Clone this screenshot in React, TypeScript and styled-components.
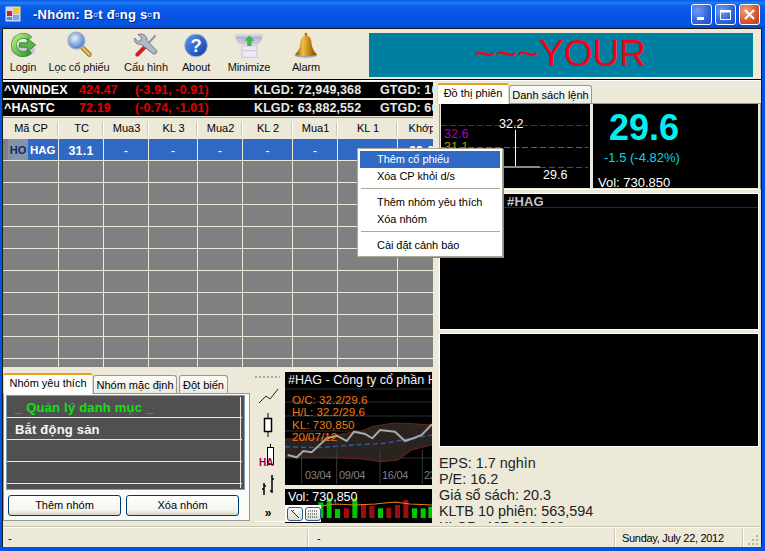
import React from "react";
import styled, { createGlobalStyle, css } from "styled-components";

const Global = createGlobalStyle`
  html, body { margin: 0; padding: 0; background: #0a50dc; }
  * { box-sizing: border-box; }
  body { font-family: "Liberation Sans", Arial, sans-serif; }
`;

const Window = styled.div`
  width: 765px; height: 551px; overflow: hidden; position: relative;
  display: flex; flex-direction: column;
  background: #0553e3; color: #000;
  font: 11px "Liberation Sans", Arial, sans-serif;
`;
const TitleBar = styled.div`
  height: 28px; flex: none; display: flex; align-items: center; padding: 0 5px 0 5px;
  background: linear-gradient(180deg, #0a5ae6 0%, #1f7cf5 10%, #0a5fe8 22%, #0553e3 60%, #0554e4 88%, #0345c8 100%);
`;
const TitleText = styled.div`
  margin-left: 12px; color: #fff; font: bold 13px "Liberation Sans", Arial, sans-serif;
  letter-spacing: 0.25px; text-shadow: 1px 1px 0 #0a2a90;
`;
const TitleButtons = styled.div`margin-left: auto; display: flex; gap: 3px; margin-right: 0; padding-top: 1px;`;
const CaptionButton = styled.div<{ $close?: boolean }>`
  width: 21px; height: 21px; border-radius: 3px; border: 1px solid #fff;
  display: flex; align-items: center; justify-content: center;
  background: ${(p) => p.$close
    ? "radial-gradient(circle at 30% 30%, #f0a080, #d8542c 60%, #b83a14)"
    : "radial-gradient(circle at 30% 30%, #6f9cf2, #2f62dc 60%, #1f4cc4)"};
`;
const Client = styled.div`
  flex: 1; min-height: 0; margin: 0 3px 4px 2px; background: #ece9d8;
  border: 1px solid #1a1a1a; border-bottom: 0; border-top-width: 1px;
  display: flex; flex-direction: column; position: relative;
`;
const Toolbar = styled.div`
  height: 51px; flex: none; display: flex; padding-left: 1px; border-bottom: 1px solid #000;
`;
const ToolItem = styled.div<{ $w: number }>`
  width: ${(p) => p.$w}px; display: flex; flex-direction: column; align-items: center;
  padding-top: 2px; font-size: 11px; white-space: nowrap;
`;
const ToolIcon = styled.svg`width: 28px; height: 28px; flex: none; display: block;`;
const ToolLabel = styled.span`margin-top: 1px; line-height: 14px; color: #111; letter-spacing: -0.1px;`;
const Banner = styled.div`
  margin: 4px 8px 2px auto; width: 384px; background: #0080a0; color: #f50018;
  display: flex; align-items: center; justify-content: center;
  font-size: 37px; line-height: 42px; padding: 0 2px 3px 0;
`;
const Main = styled.div`flex: 1; min-height: 0; display: flex; border-top: 1px solid #fff;`;
const LeftCol = styled.div`width: 430px; flex: none; display: flex; flex-direction: column; padding-top: 1px;`;
const Ticker = styled.div`
  height: 16px; margin-bottom: 2px; background: #000; display: grid; overflow: hidden;
  grid-template-columns: 75px 56px 119px 126px 60px; padding-left: 1px;
  font: bold 12.5px/16px "Liberation Sans", Arial, sans-serif; white-space: nowrap; letter-spacing: 0.1px;
`;
const TickName = styled.span`color: #fff; font-size: 12.5px;`;
const TickVal = styled.span`color: #e00000;`;
const TickVol = styled.span`color: #e8e8e8;`;
const Grid = styled.div`
  height: 250px; margin-top: -1px; overflow: hidden; background: #808080; border-top: 1px solid #8aa0b8; flex: none;
`;
const COLS = "56px 45px 45px 49px 45px 50px 45px 60px 48px";
const HeaderRow = styled.div`
  display: grid; grid-template-columns: ${COLS}; height: 21px; background: #ece9d8; border-bottom: 1px solid #ece9d8;
`;
const HeadCell = styled.div`
  display: flex; align-items: center; justify-content: center; font-size: 11px; white-space: nowrap; overflow: hidden;
  position: relative;
  &:not(:last-child)::after { content: ""; position: absolute; right: 0; top: 4px; bottom: 3px; width: 2px; background: linear-gradient(90deg, #c8c5b2 50%, #fff 50%); }
`;
const Row = styled.div<{ $sel?: boolean }>`
  display: grid; grid-template-columns: ${COLS}; height: 22px; border-bottom: 1px solid #ece9d8;
  background: ${(p) => (p.$sel ? "#316ac5" : "#808080")};
`;
const Cell = styled.div`
  border-right: 1px solid #ece9d8; color: #fff; display: flex; align-items: center; justify-content: center;
  font-size: 12px; overflow: hidden; white-space: nowrap; padding-top: 2px;
`;
const CodeCell = styled(Cell)`justify-content: flex-start; align-items: stretch; background: #808080; padding-top: 0;`;
const Exch = styled.div`
  margin-left: 5px; width: 20px; background: #8494a8; color: #0c2a66; font-weight: bold; font-size: 11px;
  display: flex; align-items: center; justify-content: center;
`;
const Code = styled.div`
  flex: 1; background: #316ac5; font-weight: bold; font-size: 11.5px; display: flex; align-items: center; padding-left: 2px;
`;
const RefCell = styled(Cell)`font-weight: bold; font-size: 12.5px; letter-spacing: 0.2px;`;
const BottomRow = styled.div`flex: 1; min-height: 0; display: flex; padding-top: 5px;`;
const TabsBox = styled.div`width: 247px; flex: none; display: flex; flex-direction: column;`;
const Tabs = styled.div`
  display: flex; align-items: flex-end; height: 21px; flex: none; gap: 0;
`;
const Tab = styled.div<{ $w: number; $active?: boolean; $gap?: number }>`
  width: ${(p) => p.$w}px; margin-left: ${(p) => p.$gap ?? 0}px; white-space: nowrap; text-align: center; font-size: 11px;
  border: 1px solid #919b9c; border-bottom: 0; border-radius: 3px 3px 0 0;
  ${(p) => p.$active
    ? css`height: 21px; line-height: 17px; background: #fff; border-top: 2px solid #e8a020; position: relative; z-index: 1; margin-bottom: -1px; border-color: #e8a020 #d8d6c8 #fff #d8d6c8;`
    : css`height: 18px; line-height: 18px; background: linear-gradient(#fbfbf8, #ecebe2);`}
`;
const FavPanel = styled.div`
  height: 128px; flex: none; border: 1px solid #919b9c; background: #fbfbf8; padding: 1px 2px 0 2px;
  display: flex; flex-direction: column;
`;
const FavList = styled.div`
  height: 95px; flex: none; background: #505050; border: 1px solid #7f9db9; position: relative; overflow: hidden; margin-right: 2px;
`;
const FavRow = styled.div<{ $green?: boolean }>`
  height: 22px; border-bottom: 1px solid #ece9d8; padding-left: 8px; margin-right: 2px;
  font: bold 13px/23px "Liberation Sans", Arial, sans-serif; letter-spacing: 0.2px;
  color: ${(p) => (p.$green ? "#10e010" : "#f4f4f4")}; white-space: nowrap;
`;
const FavBar = styled.div`position: absolute; top: 1px; bottom: 1px; right: 3px; width: 1px; background: #ece9d8;`;
const FavButtons = styled.div`display: flex; gap: 5px; padding: 5px 0 0 2px;`;
const FavBtn = styled.div`
  width: 113px; height: 21px; border: 1px solid #003c74; border-radius: 3px; text-align: center; line-height: 19px; font-size: 11px;
  background: linear-gradient(#fff, #f4f3ee 75%, #d8d4c4);
`;
const Strip = styled.div`
  width: 29px; margin-left: 5px; padding-right: 4px; flex: none; height: 150px; border-bottom: 1px solid #fff; display: flex; flex-direction: column; align-items: center;
`;
const StripGrip = styled.div`
  width: 25px; height: 2px; margin-top: 4px; background: repeating-linear-gradient(90deg, #a8a698 0 2px, transparent 2px 4px);
`;
const StripIcon = styled.svg<{ $mt: number }>`width: 26px; height: 24px; margin-top: ${(p) => p.$mt}px; flex: none; display: block;`;
const More = styled.div`font: bold 12px/12px "Liberation Sans", Arial, sans-serif; margin-top: 10px; letter-spacing: -1px;`;
const ChartCol = styled.div`flex: 1; min-width: 0; display: flex; flex-direction: column; background: #ece9d8; overflow: hidden; margin-left: 1px;`;
const ChartSvg = styled.svg<{ $h: number }>`display: block; background: #000; width: 147px; height: ${(p) => p.$h}px; flex: none;`;
const VolWrap = styled.div`position: relative; margin-top: 4px; height: 34px; flex: none;`;
const MiniBtns = styled.div`
  position: absolute; left: 0; top: 16px; width: 36px; height: 17px; background: #fff; display: flex; gap: 2px; padding: 2px 0 0 2px;
`;
const MiniBtn = styled.div`
  width: 16px; height: 14px; border: 1px solid #2c5a8c; border-radius: 3px; background: linear-gradient(#fff, #dcdcd0);
  display: flex; align-items: center; justify-content: center;
`;
const RightCol = styled.div`flex: 1; min-width: 0; display: flex; flex-direction: column; padding: 1px 0 0 4px; overflow: hidden;`;
const SessionPanel = styled.div`
  height: 87px; flex: none; margin-left: 2px; border: 1px solid #919b9c; border-bottom-color: #fff; padding: 0 2px 0 1px; display: flex; gap: 3px;
`;
const Quote = styled.div`
  flex: 1; background: #000; position: relative; height: 84px; overflow: hidden; color: #fff; border: 1px solid transparent;
  display: flex; flex-direction: column;
`;
const BigPrice = styled.div`
  font: bold 36px/36px "Liberation Sans", Arial, sans-serif; color: #00f0f0; margin: 5px 0 0 15px;
`;
const Change = styled.div`font-size: 13px; line-height: 16px; color: #00d8e0; margin: 4px 0 0 10px;`;
const QuoteVol = styled.div`font-size: 13px; line-height: 16px; margin: 9px 0 0 4px;`;
const Pane = styled.div<{ $h: number; $mt: number }>`
  height: ${(p) => p.$h}px; margin-top: ${(p) => p.$mt}px; background: #000; flex: none; border: 1px solid #fff; margin-left: 2px; margin-right: 2px;
  overflow: hidden;
`;
const PaneTitle = styled.div`
  margin-top: 1px; height: 13px; padding-left: 67px; border-bottom: 1px solid #2c2c2c;
  font: bold 13px/13px "Liberation Sans", Arial, sans-serif; color: #c4c4c4; letter-spacing: 0.2px;
`;
const Info = styled.div`
  height: 68px; overflow: hidden; margin-top: 8px; padding-left: 2px; font-size: 14.4px; line-height: 16px; color: #222;
  flex: none;
`;
const Status = styled.div`
  height: 20px; flex: none; display: flex; align-items: center; font-size: 11px; border-top: 1px solid #fbfaf4; box-shadow: 0 -1px 0 #c8c5b2;
  position: absolute; left: 0; right: 0; bottom: 0; background: #ece9d8;
`;
const StatusCell = styled.div<{ $w: number; $pl?: number }>`
  width: ${(p) => p.$w}px; height: 18px; line-height: 18px; padding-left: ${(p) => p.$pl ?? 4}px; flex: none; white-space: nowrap;
  box-shadow: inset -2px 0 0 -1px #c8c5b2; letter-spacing: -0.3px;
  border-right: 1px solid #fff;
`;
const Grip = styled.svg`margin-left: auto; margin-right: 1px; margin-top: 6px; display: block;`;
const Menu = styled.div`
  position: absolute; left: 354px; top: 119px; width: 146px; height: 109px; background: #fff;
  border: 1px solid #aca899; box-shadow: 1px 1px 0 #8a8878; padding: 2px; font-size: 11px; z-index: 5;
`;
const MenuItem = styled.div<{ $sel?: boolean }>`
  height: 17px; line-height: 17px; padding-left: 17px; white-space: nowrap; letter-spacing: -0.05px;
  ${(p) => p.$sel && css`background: #316ac5; color: #fff;`}
`;
const MenuSep = styled.div`height: 1px; background: #aca899; margin: 3px 1px 5px 1px; width: 139px;`;

const Login = () => (
  <ToolIcon viewBox="0 0 32 30">
    <defs>
      <linearGradient id="lg" x1="0" y1="0" x2="1" y2="1"><stop offset="0" stopColor="#b2ee7c" /><stop offset="1" stopColor="#2f9a35" /></linearGradient>
    </defs>
    <ellipse cx="16" cy="21" rx="14" ry="7" fill="#b6b0cc" opacity=".6" />
    <path d="M24 8 A 10.5 10.5 0 1 0 24 22" fill="none" stroke="#3a8a3c" strokeWidth="6.5" />
    <path d="M24 8 A 10.5 10.5 0 1 0 24 22" fill="none" stroke="url(#lg)" strokeWidth="5" />
    <path d="M12 12.5h9v-5l9.5 7.5-9.5 7.5v-5h-9z" fill="#58b845" stroke="#2d7a40" strokeWidth="1" />
  </ToolIcon>
);
const Search = () => (
  <ToolIcon viewBox="0 0 32 30">
    <defs>
      <radialGradient id="sg" cx=".4" cy=".35" r=".7"><stop offset="0" stopColor="#e8f2fc" /><stop offset="1" stopColor="#3d72c4" /></radialGradient>
    </defs>
    <line x1="20" y1="18" x2="28" y2="26" stroke="#8a6a20" strokeWidth="5" strokeLinecap="round" />
    <line x1="20" y1="18" x2="28" y2="26" stroke="#f0c050" strokeWidth="3" strokeLinecap="round" />
    <circle cx="13" cy="10" r="9.5" fill="url(#sg)" stroke="#9aa8c8" strokeWidth="1.6" />
  </ToolIcon>
);
const Tools = () => (
  <ToolIcon viewBox="0 0 32 30">
    <line x1="6" y1="26" x2="15" y2="17" stroke="#d81c24" strokeWidth="4.5" strokeLinecap="round" />
    <line x1="15" y1="17" x2="27" y2="4" stroke="#8c98ac" strokeWidth="2.5" />
    <path d="M7 3 l4 4 -1 3 -3 1 -4-4 c-1 5 3 8 7 7 L24 25 a3 3 0 0 0 4-4 L17 10 c1-5-4-9-10-7z" fill="#b0b8c8" stroke="#626a7c" strokeWidth="1" />
  </ToolIcon>
);
const About = () => (
  <ToolIcon viewBox="0 0 32 30">
    <defs>
      <linearGradient id="ab" x1="0" y1="0" x2="1" y2="1"><stop offset="0" stopColor="#5a9af0" /><stop offset="1" stopColor="#0c3aa8" /></linearGradient>
    </defs>
    <circle cx="16" cy="15.5" r="13" fill="url(#ab)" stroke="#b4b8d8" strokeWidth="1" />
    <text x="16" y="23" textAnchor="middle" fontFamily="Liberation Sans" fontWeight="bold" fontSize="21" fill="#fff">?</text>
  </ToolIcon>
);
const Minimize = () => (
  <ToolIcon viewBox="0 0 32 30" style={{ overflow: "visible" }}>
    <rect x="1" y="3" width="30" height="6" fill="#b8b4d0" />
    <rect x="-1" y="3" width="34" height="2" fill="#d8d6e4" />
    <path d="M1 9 h30 l-4 5 h-22z" fill="#c8c6d8" />
    <rect x="8" y="16" width="17" height="13" fill="#eceaf4" stroke="#c4c2d4" />
    <rect x="8" y="21" width="17" height="1" fill="#c4c2d4" />
    <path d="M16.5 4 l6 6 h-3.5 v6 h-5 v-6 h-3.5z" fill="#3cb850" />
  </ToolIcon>
);
const Bell = () => (
  <ToolIcon viewBox="0 0 32 30" style={{ overflow: "visible" }}>
    <defs>
      <linearGradient id="bl" x1="0" y1="0" x2="1" y2="0"><stop offset="0" stopColor="#7a4a04" /><stop offset=".35" stopColor="#f0c040" /><stop offset=".7" stopColor="#b87c14" /><stop offset="1" stopColor="#704404" /></linearGradient>
    </defs>
    <ellipse cx="16" cy="27" rx="13" ry="2.5" fill="#a8a4bc" />
    <rect x="14.5" y="1" width="3" height="4" rx="1.5" fill="#a87410" />
    <path d="M16 4 c-5 0-6 4-6.5 10 c-.4 5-3.5 9-6 12 c4 2 21 2 25 0 c-2.5-3-5.6-7-6-12 c-.5-6-1.500-10-6.500-10z" fill="url(#bl)" />
  </ToolIcon>
);

const heads = ["Mã CP", "TC", "Mua3", "KL 3", "Mua2", "KL 2", "Mua1", "KL 1", "Khớp"];
const VOL: [number, number, string][] = [
  [100, 322, "g"], [125, 310, "g"], [150, 342, "g"], [177, 340, "r"], [202, 310, "g"], [228, 327, "r"], [253, 333, "r"],
  [279, 340, "g"], [304, 339, "r"], [330, 330, "r"], [355, 315, "r"], [381, 340, "g"], [407, 340, "g"], [430, 335, "g"],
];
const pts = (a: number[][]) => a.map(([x, y]) => `${(x / 3).toFixed(1)},${(23 + y / 3).toFixed(1)}`).join(" ");
const upper = [[0, 132], [100, 130], [150, 120], [230, 108], [260, 95], [320, 85], [360, 85], [441, 90]];
const lower = [[0, 186], [150, 188], [230, 192], [290, 200], [340, 195], [380, 165], [441, 150]];
const price = [[8, 180], [35, 187], [55, 168], [80, 172], [125, 130], [155, 122], [185, 138], [207, 110], [240, 117], [262, 130], [285, 105], [330, 110], [360, 138], [385, 130], [410, 120], [441, 88]];
const avg = [[0, 155], [100, 158], [200, 150], [300, 145], [380, 130], [441, 120]];

const MainChart = () => (
  <ChartSvg $h={113} viewBox="0 0 147 113">
    {[17, 30, 44, 59, 72, 86].map((y) => <line key={y} x1="0" x2="147" y1={y} y2={y} stroke="#303030" />)}
    <polygon points={pts(upper) + " " + pts([...lower].reverse())} fill="#2a2320" />
    <polyline points={pts(upper)} fill="none" stroke="#6e2418" />
    <polyline points={pts(lower)} fill="none" stroke="#6e2418" />
    {[50, 155, 285, 412].map((x) => <line key={x} x1={x / 3} x2={x / 3} y1="78" y2="112" stroke="#3a3a3a" />)}
    <polyline points={pts(avg)} fill="none" stroke="#1c60b8" strokeWidth="1.4" strokeDasharray="5 3" />
    <polyline points={pts(price)} fill="none" stroke="#a8a8a8" strokeWidth="2" />
    <g fontFamily="Liberation Sans" fontSize="11.6">
      <text x="3" y="12" fill="#f4f4f4" fontSize="12.5">#HAG - Công ty cổ phần HAG</text>
      <g fill="#f07a10">
        <text x="7" y="32">O/C: 32.2/29.6</text>
        <text x="7" y="44">H/L: 32.2/29.6</text>
        <text x="7" y="57">KL: 730,850</text>
        <text x="7" y="69">20/07/12</text>
      </g>
      <g fill="#808080" fontSize="11" letterSpacing="-0.3">
        <text x="20" y="107">03/04</text>
        <text x="54" y="107">09/04</text>
        <text x="97" y="107">16/04</text>
        <text x="139" y="107">23/04</text>
      </g>
    </g>
  </ChartSvg>
);
const VolChart = () => (
  <ChartSvg $h={34} viewBox="0 0 147 34">
    {VOL.map(([x, t, c]) => (
      <rect key={x} x={x / 3} y={t / 3 - 94} width="5" height={29 - (t / 3 - 94)} fill={c === "g" ? "#00c800" : "#a00c0c"} />
    ))}
    <polyline points="30,18 50,15 70,16 90,15 110,13 125,15 147,16" fill="none" stroke="#e88010" strokeWidth="1.2" />
    <text x="3" y="12" fill="#fff" fontFamily="Liberation Sans" fontSize="12.5">Vol: 730,850</text>
  </ChartSvg>
);
const Session = () => (
  <svg width="149" height="84" viewBox="0 0 149 84" style={{ display: "block", background: "#000", flex: "none" }}>
    <line x1="0" x2="147" y1="21.500" y2="21.500" stroke="#80107a" strokeDasharray="6 3" />
    <line x1="0" x2="147" y1="43.500" y2="43.500" stroke="#6e6e00" strokeDasharray="6 3" />
    <line x1="0" x2="147" y1="63.500" y2="63.500" stroke="#0a6a6a" strokeDasharray="6 3" />
    <line x1="74.500" x2="74.500" y1="26" y2="63" stroke="#fff" />
    <rect x="50" y="62" width="49" height="2" fill="#888" />
    <g fontFamily="Liberation Sans" fontSize="12.5">
      <text x="3" y="34" fill="#b000b0">32.6</text>
      <text x="3" y="47" fill="#a0a000">31.1</text>
      <text x="58" y="24" fill="#fff">32.2</text>
      <text x="102" y="75" fill="#fff">29.6</text>
    </g>
  </svg>
);

export default function App() {
  return (
    <Window>
      <Global />
      <TitleBar>
        <svg width="16" height="16" viewBox="0 0 16 16">
          <rect x="0" y="0" width="16" height="16" fill="#c8d8f4" stroke="#3a5a9c" />
          <rect x="2" y="5" width="5" height="5" fill="#d02020" />
          <rect x="8" y="2" width="6" height="6" fill="#f4c820" />
          <rect x="2" y="11" width="5" height="3" fill="#5a88d8" />
          <rect x="8" y="9" width="6" height="5" fill="#7aa4e4" />
        </svg>
        <TitleText>-Nhóm: B▫t đ▫ng s▫n</TitleText>
        <TitleButtons>
          <CaptionButton>
            <svg width="13" height="13" viewBox="0 0 13 13"><rect x="2" y="9" width="7" height="3" fill="#fff" /></svg>
          </CaptionButton>
          <CaptionButton>
            <svg width="13" height="13" viewBox="0 0 13 13"><rect x="1.500" y="2.500" width="10" height="9" fill="none" stroke="#fff" /><rect x="1" y="2" width="11" height="2.500" fill="#fff" /></svg>
          </CaptionButton>
          <CaptionButton $close>
            <svg width="13" height="13" viewBox="0 0 13 13"><path d="M2 2l9 9M11 2l-9 9" stroke="#fff" strokeWidth="2" /></svg>
          </CaptionButton>
        </TitleButtons>
      </TitleBar>
      <Client>
        <Toolbar>
          <ToolItem $w={38}><Login /><ToolLabel>Login</ToolLabel></ToolItem>
          <ToolItem $w={74}><Search /><ToolLabel>Lọc cổ phiếu</ToolLabel></ToolItem>
          <ToolItem $w={60}><Tools /><ToolLabel>Cấu hình</ToolLabel></ToolItem>
          <ToolItem $w={40}><About /><ToolLabel>About</ToolLabel></ToolItem>
          <ToolItem $w={66}><Minimize /><ToolLabel>Minimize</ToolLabel></ToolItem>
          <ToolItem $w={48}><Bell /><ToolLabel>Alarm</ToolLabel></ToolItem>
          <Banner>~~~YOUR</Banner>
        </Toolbar>
        <Main>
          <LeftCol>
            <Ticker>
              <TickName>^VNINDEX</TickName><TickVal>424.47</TickVal><TickVal>(-3.91, -0.91)</TickVal>
              <TickVol>KLGD: 72,949,368</TickVol><TickVol>GTGD: 1020</TickVol>
            </Ticker>
            <Ticker>
              <TickName>^HASTC</TickName><TickVal>72.19</TickVal><TickVal>(-0.74, -1.01)</TickVal>
              <TickVol>KLGD: 63,882,552</TickVol><TickVol>GTGD: 600</TickVol>
            </Ticker>
            <Grid>
              <HeaderRow>{heads.map((h) => <HeadCell key={h}>{h}</HeadCell>)}</HeaderRow>
              <Row $sel>
                <CodeCell><Exch>HO</Exch><Code>HAG</Code></CodeCell>
                <RefCell>31.1</RefCell>
                {["a", "b", "c", "d", "e"].map((k) => <Cell key={k}>-</Cell>)}
                <Cell />
                <RefCell>29.6</RefCell>
              </Row>
              {Array.from({ length: 10 }, (_, i) => (
                <Row key={i}>{heads.map((h) => <Cell key={h} />)}</Row>
              ))}
            </Grid>
            <BottomRow>
              <TabsBox>
                <Tabs>
                  <Tab $w={90} $active>Nhóm yêu thích</Tab>
                  <Tab $w={84}>Nhóm mặc định</Tab>
                  <Tab $w={49} $gap={2}>Đột biến</Tab>
                </Tabs>
                <FavPanel>
                  <FavList>
                    <FavRow $green>_ Quản lý danh mục _</FavRow>
                    <FavRow>Bắt động sản</FavRow>
                    <FavRow />
                    <FavRow />
                    <FavBar />
                  </FavList>
                  <FavButtons>
                    <FavBtn>Thêm nhóm</FavBtn>
                    <FavBtn>Xóa nhóm</FavBtn>
                  </FavButtons>
                </FavPanel>
              </TabsBox>
              <Strip>
                <StripGrip />
                <StripIcon $mt={6} viewBox="0 0 26 24"><path d="M4 19 L11 12 L15 15 L23 5" fill="none" stroke="#222" /></StripIcon>
                <StripIcon $mt={5} viewBox="0 0 26 24"><path d="M13 0v5M13 19v5" stroke="#000" /><rect x="9.500" y="5.500" width="7" height="13" fill="#fff" stroke="#000" strokeWidth="1.500" /></StripIcon>
                <StripIcon $mt={7} viewBox="0 0 26 24" style={{ overflow: "visible" }}>
                  <path d="M15.500 0v4" stroke="#000" /><rect x="12.500" y="3.500" width="6" height="17" fill="#fff" stroke="#000" />
                  <text x="4" y="22" fontFamily="Liberation Sans" fontSize="10" fontWeight="bold" fill="#8a0050">HA</text>
                </StripIcon>
                <StripIcon $mt={5} viewBox="0 0 26 24">
                  <path d="M9 10v12M7 16h2M9 13h2M17 2v18M15 18h2M17 6h2" stroke="#000" fill="none" strokeWidth="1.500" />
                </StripIcon>
                <More>»</More>
              </Strip>
              <ChartCol>
                <MainChart />
                <VolWrap>
                  <VolChart />
                  <MiniBtns>
                    <MiniBtn><svg width="10" height="10" viewBox="0 0 10 10"><path d="M1 1l8 8M2 3l2-2" stroke="#222" /></svg></MiniBtn>
                    <MiniBtn><svg width="12" height="10" viewBox="0 0 12 10"><path d="M1 2h10M1 5h10M1 8h10" stroke="#222" strokeDasharray="1 1" /></svg></MiniBtn>
                  </MiniBtns>
                </VolWrap>
              </ChartCol>
            </BottomRow>
          </LeftCol>
          <RightCol>
            <Tabs>
              <Tab $w={72} $active>Đồ thị phiên</Tab>
              <Tab $w={83}>Danh sách lệnh</Tab>
            </Tabs>
            <SessionPanel>
              <Session />
              <Quote>
                <BigPrice>29.6</BigPrice>
                <Change>-1.5 (-4.82%)</Change>
                <QuoteVol>Vol: 730,850</QuoteVol>
              </Quote>
            </SessionPanel>
            <Pane $h={137} $mt={3}><PaneTitle>#HAG</PaneTitle></Pane>
            <Pane $h={114} $mt={3} />
            <Info>
              <div>EPS: 1.7 nghìn</div>
              <div>P/E: 16.2</div>
              <div>Giá sổ sách: 20.3</div>
              <div>KLTB 10 phiên: 563,594</div>
              <div>KLCP: 467,288,588</div>
            </Info>
          </RightCol>
        </Main>
        <Status>
          <StatusCell $w={306} $pl={5}>-</StatusCell>
          <StatusCell $w={307} $pl={8}>-</StatusCell>
          <StatusCell $w={128} $pl={6}>Sunday, July 22, 2012</StatusCell>
          <Grip width="12" height="12" viewBox="0 0 12 12" fill="#b8b5a2">
            <rect x="8" y="0" width="2" height="2" /><rect x="4" y="4" width="2" height="2" /><rect x="8" y="4" width="2" height="2" />
            <rect x="0" y="8" width="2" height="2" /><rect x="4" y="8" width="2" height="2" /><rect x="8" y="8" width="2" height="2" />
          </Grip>
        </Status>
        <Menu>
          <MenuItem $sel>Thêm cổ phiếu</MenuItem>
          <MenuItem>Xóa CP khỏi d/s</MenuItem>
          <MenuSep />
          <MenuItem>Thêm nhóm yêu thích</MenuItem>
          <MenuItem>Xóa nhóm</MenuItem>
          <MenuSep />
          <MenuItem>Cài đặt cảnh báo</MenuItem>
        </Menu>
      </Client>
    </Window>
  );
}
